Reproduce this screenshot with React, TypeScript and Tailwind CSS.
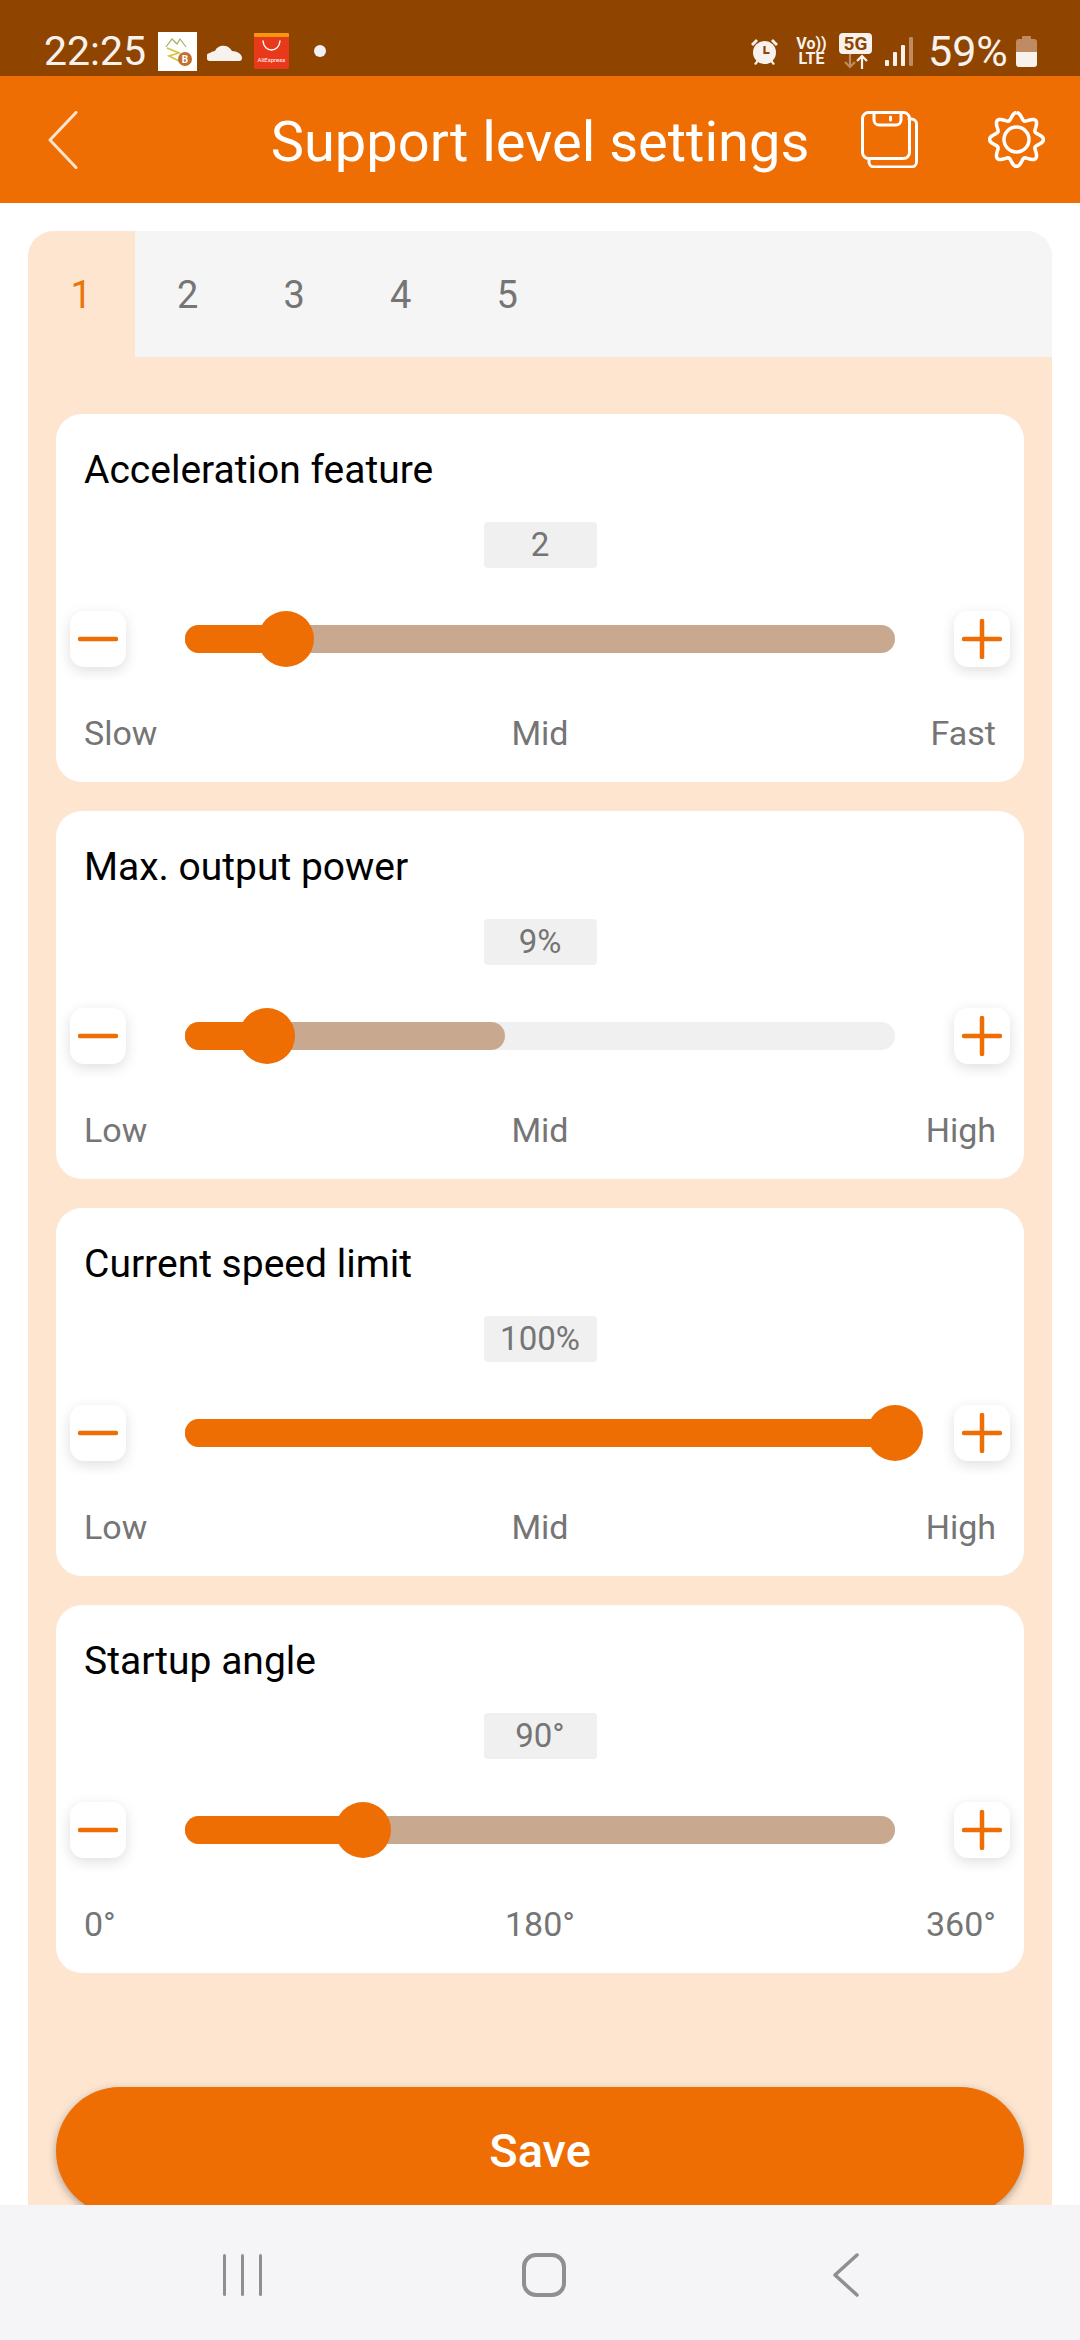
const levels = ['1', '2', '3', '4', '5'];

const sliders = [
    { title: 'Acceleration feature', value: '2', knob: 14.2, limit: 100, labels: ['Slow', 'Mid', 'Fast'] },
    { title: 'Max. output power', value: '9%', knob: 11.5, limit: 45, labels: ['Low', 'Mid', 'High'] },
    { title: 'Current speed limit', value: '100%', knob: 100, limit: 100, labels: ['Low', 'Mid', 'High'] },
    { title: 'Startup angle', value: '90°', knob: 25, limit: 100, labels: ['0°', '180°', '360°'] },
];

// scalloped outline for the settings cog
const cogPath = Array.from({ length: 97 }, (_, i) => {
    const a = (i / 96) * Math.PI * 2;
    const r = 23.5 + 3.5 * Math.cos(a * 8);
    return `${i === 0 ? 'M' : 'L'}${(28.5 + r * Math.sin(a)).toFixed(2)} ${(28.5 - r * Math.cos(a)).toFixed(2)}`;
}).join(' ');

function StepButton({ kind }: { kind: 'minus' | 'plus' }) {
    const isMinus = kind === 'minus';
    return (
        <div className={`flex h-[84px] w-[90px] shrink-0 items-start overflow-hidden pt-[14px] ${isMinus ? 'justify-start pl-[14px]' : 'justify-end pr-[14px]'}`}>
            <button className="flex h-[56px] w-[56px] items-center justify-center rounded-[14px] bg-white shadow-[0_4px_14px_rgba(0,0,0,0.13)]">
                <svg viewBox="0 0 40 40" fill="none" stroke="#ee6e03" strokeWidth={4.5} strokeLinecap="round" className="h-[40px] w-[40px]">
                    <path d="M2 20h36" />
                    {!isMinus && <path d="M20 2v36" />}
                </svg>
            </button>
        </div>
    );
}

function SliderCard({ title, value, knob, limit, labels }: (typeof sliders)[number]) {
    return (
        <section className="rounded-[26px] bg-white pb-[30px] pt-[35px]">
            <h2 className="px-[28px] text-[39px] leading-[42px] text-black">{title}</h2>
            <div className="mx-auto mt-[31px] flex h-[46px] w-[113px] items-center justify-center rounded-[4px] bg-[#f0f0f0] text-[33px] text-[#757575]">
                {value}
            </div>
            <div className="mt-[29px] flex items-center gap-[39px]">
                <StepButton kind="minus" />
                <div className="relative h-[28px] flex-1 rounded-full bg-[#f0f0f0]">
                    <div className="absolute inset-y-0 left-0 rounded-full bg-[#c8a88f]" style={{ width: `${limit}%` }} />
                    <div className="absolute inset-y-0 left-0 rounded-l-full bg-[#ee6e03]" style={{ width: `${knob}%` }} />
                    <div
                        className="absolute top-1/2 h-[56px] w-[56px] -translate-x-1/2 -translate-y-1/2 rounded-full bg-[#ee6e03]"
                        style={{ left: `${knob}%` }}
                    />
                </div>
                <StepButton kind="plus" />
            </div>
            <div className="mt-[33px] grid grid-cols-3 px-[28px] text-[34px] leading-[38px] text-[#757575]">
                <span>{labels[0]}</span>
                <span className="text-center">{labels[1]}</span>
                <span className="text-right">{labels[2]}</span>
            </div>
        </section>
    );
}

function StatusBar() {
    return (
        <div className="flex h-[76px] shrink-0 items-center justify-between bg-[#8f4500] pl-[44px] pr-[43px] pt-[26px] text-[#f7f2ee]">
            <div className="flex items-center">
                <span className="w-[99px] text-[41px] font-normal leading-none">22:25</span>
                <svg viewBox="0 0 39 39" className="ml-[15px] h-[39px] w-[39px]">
                    <rect width="39" height="39" fill="#fff" />
                    <path d="M8 15l6-8 5 5 3-5 6 8" fill="none" stroke="#9db35a" strokeWidth={1.2} />
                    <path d="M9 16l12 5-10 3 12 6" fill="none" stroke="#d4c23c" strokeWidth={1.6} />
                    <circle cx="27" cy="27" r="7" fill="#c1702f" />
                    <text x="27" y="31" textAnchor="middle" fontSize="10" fontWeight="700" fill="#fff">B</text>
                </svg>
                <svg viewBox="0 0 35 20" fill="currentColor" className="ml-[10px] h-[20px] w-[35px]">
                    <path d="M4 20a4 4 0 0 1-1-8c1-1 3-2 5-2 2-6 13-8 17 0 5 0 10 3 10 7 0 2-1 3-3 3z" />
                </svg>
                <svg viewBox="0 0 35 36" className="ml-[12px] h-[36px] w-[35px]">
                    <rect y="1" width="35" height="35" rx="2" fill="#e8391a" />
                    <rect y="0" width="35" height="4" rx="1" fill="#f6970f" />
                    <path d="M9 8c1 12 16 12 17 0" fill="none" stroke="#fff" strokeWidth={1.4} strokeLinecap="round" />
                    <text x="17.5" y="29" textAnchor="middle" fontSize="6" fill="#fff">AliExpress</text>
                </svg>
                <span className="ml-[25px] h-[12px] w-[12px] rounded-full bg-[#f3f0f2]" />
            </div>
            <div className="flex items-center">
                <svg viewBox="0 0 29 29" fill="currentColor" className="h-[29px] w-[29px]">
                    <circle cx="14.5" cy="15.5" r="11.5" />
                    <path d="M1 7l5-5 2 2-5 5zM28 7l-5-5-2 2 5 5zM4 27l3-4 2 1-3 4zM25 27l-3-4-2 1 3 4z" />
                    <path d="M14.5 9v7h5" fill="none" stroke="#8f4500" strokeWidth={2.2} />
                </svg>
                <div className="ml-[17px] flex w-[31px] flex-col items-center text-[16px] font-bold leading-[15px]">
                    <span>Vo))</span>
                    <span>LTE</span>
                </div>
                <div className="ml-[12px] flex w-[33px] flex-col items-center">
                    <span className="flex h-[21px] w-[33px] items-center justify-center rounded-[4px] bg-[#f7f2ee] text-[19px] font-bold leading-none text-[#8f4500]">5G</span>
                    <svg viewBox="0 0 33 15" fill="none" strokeWidth={2.2} className="h-[15px] w-[33px]">
                        <path d="M11 0v13M6 8l5 5 5-5" stroke="#c08a62" />
                        <path d="M23 15V2M18 7l5-5 5 5" stroke="#f7f2ee" />
                    </svg>
                </div>
                <svg viewBox="0 0 28 29" className="ml-[13px] h-[29px] w-[28px]">
                    <rect x="0" y="23" width="4" height="6" rx="1" fill="#f7f2ee" />
                    <rect x="8" y="15" width="4" height="14" rx="1" fill="#f7f2ee" />
                    <rect x="16" y="8" width="4" height="21" rx="1" fill="#f7f2ee" />
                    <rect x="24" y="0" width="4" height="29" rx="1" fill="#c08a62" />
                </svg>
                <span className="ml-[15px] w-[80px] text-[43px] font-normal leading-none">59%</span>
                <svg viewBox="0 0 21 31" className="ml-[8px] h-[31px] w-[21px]">
                    <rect x="6" y="0" width="9" height="4" rx="1" fill="#c08a62" />
                    <path d="M3 3h15a3 3 0 0 1 3 3v10H0V6a3 3 0 0 1 3-3z" fill="#c08a62" />
                    <path d="M0 16h21v12a3 3 0 0 1-3 3H3a3 3 0 0 1-3-3z" fill="#f7f2ee" />
                </svg>
            </div>
        </div>
    );
}

function Header() {
    return (
        <header className="grid h-[127px] shrink-0 grid-cols-[1fr_auto_1fr] items-center bg-[#ee6e03] text-white">
            <div className="pl-[48px]">
                <svg viewBox="0 0 30 58" fill="none" stroke="#fbe3cf" strokeWidth={3} strokeLinecap="round" strokeLinejoin="round" className="h-[58px] w-[30px]">
                    <path d="M28 1.5L2 29l26 27.5" />
                </svg>
            </div>
            <h1 className="pt-[4px] text-[56px] font-normal leading-none">Support level settings</h1>
            <div className="flex items-center justify-end gap-[70px] pr-[35px]">
                <svg viewBox="0 0 57 57" fill="none" stroke="#fff" strokeWidth={3} strokeLinecap="round" strokeLinejoin="round" className="h-[57px] w-[57px]">
                    <rect x="1.5" y="1.5" width="47" height="46" rx="6" />
                    <path d="M13 1.5V9a5 5 0 0 0 5 5h17a5 5 0 0 0 5-5V1.5" />
                    <path d="M29.500 6v3" />
                    <path d="M48 8h2.500a5 5 0 0 1 5 5v38a5 5 0 0 1-5 5H13a5 5 0 0 1-5-5v-3" />
                </svg>
                <svg viewBox="0 0 57 57" fill="none" stroke="#fff" strokeWidth={3.5} className="h-[57px] w-[57px]">
                    <path d={cogPath} />
                    <circle cx="28.500" cy="28.500" r="12.500" />
                </svg>
            </div>
        </header>
    );
}

function SystemNav() {
    return (
        <nav className="flex h-[135px] shrink-0 items-center justify-center bg-[#f5f5f7] pl-[8px] pt-[5px]">
            <div className="flex w-[302px] justify-center gap-[15px]">
                <span className="h-[42px] w-[3px] rounded-full bg-[#8e8e93]" />
                <span className="h-[42px] w-[3px] rounded-full bg-[#8e8e93]" />
                <span className="h-[42px] w-[3px] rounded-full bg-[#8e8e93]" />
            </div>
            <div className="flex w-[302px] justify-center">
                <span className="h-[44px] w-[44px] rounded-[14px] border-[4px] border-[#8e8e93]" />
            </div>
            <div className="flex w-[302px] justify-center">
                <svg viewBox="0 0 26 44" fill="none" stroke="#8e8e93" strokeWidth={3.5} strokeLinecap="round" strokeLinejoin="round" className="h-[44px] w-[26px]">
                    <path d="M24 2L2 22l22 20" />
                </svg>
            </div>
        </nav>
    );
}

export default function App() {
    return (
        <div className="flex h-[2340px] w-[1080px] flex-col overflow-hidden bg-white font-[Roboto,sans-serif]">
            <StatusBar />
            <Header />
            <main className="min-h-0 flex-1 overflow-hidden px-[28px] pt-[28px]">
                <div className="overflow-hidden rounded-t-[26px] bg-[#fde5d0] pb-[40px]">
                    <div className="flex h-[126px] bg-[#f5f5f5]">
                        {levels.map((level, i) => (
                            <button
                                key={level}
                                className={`w-[106.500px] pt-[3px] text-[38px] ${i === 0 ? 'bg-[#fde5d0] text-[#e8760f]' : 'text-[#757575]'}`}
                            >
                                {level}
                            </button>
                        ))}
                    </div>
                    <div className="flex flex-col gap-[29px] px-[28px] pt-[57px]">
                        {sliders.map((slider) => (
                            <SliderCard key={slider.title} {...slider} />
                        ))}
                    </div>
                    <div className="px-[28px] pt-[114px]">
                        <button className="h-[128px] w-full rounded-full bg-[#ee6e03] text-[47px] font-medium text-white shadow-[0_3px_8px_rgba(0,0,0,0.3)]">
                            Save
                        </button>
                    </div>
                </div>
            </main>
            <SystemNav />
        </div>
    );
}
